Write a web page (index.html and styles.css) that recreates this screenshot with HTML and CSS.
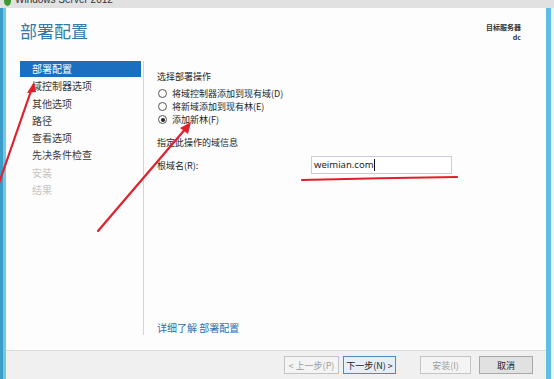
FILE: index.html
```html
<!DOCTYPE html>
<html lang="zh-CN">
<head>
    <meta charset="UTF-8">
    <title>部署配置</title>
    <link rel="stylesheet" href="styles.css">
</head>
<body>

<div class="titlebar"><span class="app-icon"></span><span class="app-name">Windows Server 2012</span></div>

<div class="frame">
    <div class="edge-left"></div>

    <div class="dialog">
        <!-- 标题 -->
        <div class="header">
            <h1>部署配置</h1>
            <div class="target">
                <div>目标服务器</div>
                <div>dc</div>
            </div>
        </div>

        <div class="body">
            <ul class="nav">
                <li class="active">部署配置</li>
                <li>域控制器选项</li>
                <li>其他选项</li>
                <li>路径</li>
                <li>查看选项</li>
                <li>先决条件检查</li>
                <li class="disabled">安装</li>
                <li class="disabled">结果</li>
            </ul>

            <div class="content">
                <p class="label">选择部署操作</p>
                <label class="radio"><span class="dot"></span>将域控制器添加到现有域(D)</label>
                <label class="radio"><span class="dot"></span>将新域添加到现有林(E)</label>
                <label class="radio"><span class="dot checked"></span>添加新林(F)</label>

                <p class="label section">指定此操作的域信息</p>
                <div class="field">
                    <span class="field-name">根域名(R):</span>
                    <div class="input">weimian.com<span class="caret"></span></div>
                </div>

                <a class="more">详细了解 部署配置</a>
            </div>
        </div>

        <div class="footer">
            <button class="btn" disabled>&lt; 上一步(P)</button>
            <button class="btn primary">下一步(N) &gt;</button>
            <button class="btn wide" disabled>安装(I)</button>
            <button class="btn cancel">取消</button>
        </div>
    </div>

    <div class="edge-right"></div>
</div>

<!-- 红色标注 -->
<svg class="marks" width="554" height="379" viewBox="0 0 554 379">
    <g stroke="#e0202c" stroke-width="2.2" fill="none" stroke-linecap="round">
        <line x1="-2" y1="186" x2="32" y2="88"/>
        <line x1="98" y1="231" x2="187" y2="127"/>
        <path d="M302 180 Q380 178 457 177"/>
    </g>
    <g fill="#e0202c">
        <polygon points="34,82 27,93 36,92"/>
        <polygon points="191,122 180,128 188,134"/>
    </g>
</svg>

</body>
</html>
```

FILE: styles.css
```css
* {
    margin: 0;
    padding: 0;
    box-sizing: border-box;
}
body {
    width: 554px;
    height: 379px;
    overflow: hidden;
    position: relative;
    background: #e3e3e3;
    font-family: "Noto Sans CJK SC", "Noto Sans", sans-serif;
    font-size: 9px;
    color: #1e1e1e;
}
.titlebar {
    height: 8px;
    background: #e1e1e1;
    display: flex;
    align-items: flex-end;
    gap: 4px;
    padding-left: 4px;
    overflow: hidden;
}
.app-icon {
    width: 7px;
    height: 10px;
    margin-bottom: 2px;
    background: #3d9b35;
    border-radius: 50%;
}
.app-name {
    font-family: "Liberation Sans", sans-serif;
    font-size: 10px;
    line-height: 10px;
    margin-bottom: 3px;
    color: #333;
}
.frame {
    display: flex;
    height: 371px;
}
.edge-left {
    width: 6px;
    background: linear-gradient(to right, #3b9cc8 0, #3b9cc8 3px, #74c6e5 3px);
}
.edge-right {
    width: 8px;
    background: linear-gradient(to right, #5fbfe2 0, #5fbfe2 5px, #f3f3f3 5px);
}
.dialog {
    flex: 1;
    display: flex;
    flex-direction: column;
    background: #fdfdfd;
}
.header {
    display: flex;
    justify-content: space-between;
    padding: 11px 25px 0 14px;
    height: 53px;
}
.header h1 {
    font-size: 17px;
    font-weight: normal;
    line-height: 24px;
    color: #3479a6;
}
.target {
    text-align: right;
    font-size: 7px;
    font-weight: bold;
    line-height: 10px;
    padding-top: 3px;
    color: #333;
}
.body {
    flex: 1;
    display: flex;
    padding-bottom: 15px;
}
.nav {
    list-style: none;
    width: 124px;
    margin-left: 14px;
    border-right: 1px solid #d4d4d4;
    padding-right: 2px;
}
.nav li {
    height: 17.3px;
    line-height: 16px;
    padding-left: 12px;
    font-size: 10px;
    color: #3a3a3a;
}
.nav li.active {
    background: #1a6fc0;
    color: #fff;
    height: 16px;
    margin-bottom: 1.3px;
}
.nav li.disabled {
    color: #c4c4c4;
}
.content {
    flex: 1;
    display: flex;
    flex-direction: column;
    padding: 9px 0 0 13px;
}
.label {
    line-height: 13px;
    margin-bottom: 4px;
}
.label.section {
    margin-top: 10px;
    margin-bottom: 7px;
}
.radio {
    display: flex;
    align-items: center;
    gap: 5px;
    height: 13px;
    line-height: 13px;
    padding-left: 1px;
}
.dot {
    width: 9px;
    height: 9px;
    border: 1px solid #555;
    border-radius: 50%;
    display: flex;
    align-items: center;
    justify-content: center;
}
.dot.checked::after {
    content: "";
    width: 4px;
    height: 4px;
    border-radius: 50%;
    background: #222;
}
.field {
    display: flex;
    align-items: center;
}
.field-name {
    width: 154px;
}
.input {
    width: 141px;
    height: 18px;
    border: 1px solid #c9ced6;
    background: #fff;
    padding-left: 2px;
    font-family: "Noto Sans", sans-serif;
    font-size: 9.5px;
    line-height: 16px;
    display: flex;
    align-items: center;
}
.caret {
    width: 1px;
    height: 12px;
    background: #111;
}
.more {
    margin-top: auto;
    font-size: 10px;
    color: #2a6db0;
    line-height: 14px;
}
.footer {
    height: 29px;
    border-top: 1px solid #dcdcdc;
    background: #f0f0f0;
    display: flex;
    align-items: center;
    padding-left: 278px;
    gap: 4px;
}
.btn {
    height: 18px;
    width: 55px;
    font-family: "Noto Sans CJK SC", sans-serif;
    font-size: 9px;
    border: 1px solid #c4c4c4;
    background: #f4f4f4;
    color: #9c9c9c;
}
.btn.primary {
    width: 53px;
    border-color: #4b8cc8;
    background: #e6eef7;
    color: #1a1a1a;
}
.btn.wide {
    margin-left: 20px;
    width: 51px;
}
.btn.cancel {
    margin-left: 4px;
    width: 54px;
    border-color: #a8a8a8;
    background: #e1e1e1;
    color: #1a1a1a;
}
.marks {
    position: absolute;
    top: 0;
    left: 0;
    pointer-events: none;
}
```
